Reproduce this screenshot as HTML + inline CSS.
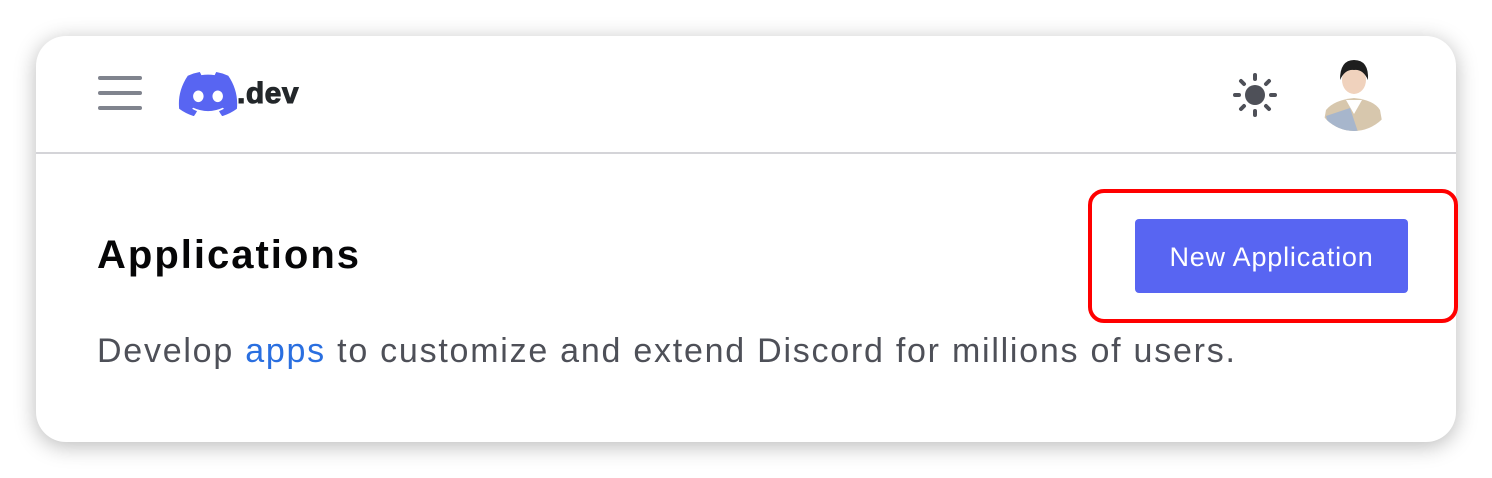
<!DOCTYPE html>
<html><head><style>
body{margin:0;width:1492px;height:478px;background:#fff;font-family:"Liberation Sans",sans-serif;position:relative;overflow:hidden}
.card{position:absolute;left:36px;top:36px;width:1420px;height:406px;background:#fff;border-radius:30px;box-shadow:0 4px 22px rgba(0,0,0,.28);overflow:hidden}
.hdr{position:absolute;left:0;top:0;width:100%;height:116px;border-bottom:2px solid #d4d4d8}
.ham{position:absolute;left:62px;top:40px;width:44px}
.ham div{height:4px;background:#80848e;border-radius:2px;margin-bottom:11px}
h1{position:absolute;left:61px;top:197px;margin:0;font-size:40px;font-weight:bold;color:#060607;letter-spacing:2px}
p{position:absolute;left:61px;top:296px;margin:0;font-size:34px;color:#4e5058;letter-spacing:1.75px}
p span{color:#2a6fe0}
.btn{position:absolute;left:1099px;top:183px;width:273px;height:74px;background:#5865f2;border-radius:4px;color:#fff;font-size:27px;text-align:center;line-height:76px;letter-spacing:0.8px}
.red{position:absolute;left:1088px;top:189px;width:362px;height:126px;border:4px solid #f00;border-radius:16px}
</style></head><body>
<div class="card">
<div class="hdr">
<div class="ham"><div></div><div></div><div></div></div>
<svg style="position:absolute;left:142px;top:36px" width="60" height="44" viewBox="0 0 127 96"><path fill="#5865f2" d="M107.7 8.07A105.15 105.15 0 0 0 81.47 0a72 72 0 0 0-3.360 6.83 97.68 97.68 0 0 0-29.11 0A72.370 72.370 0 0 0 45.640 0a105.890 105.890 0 0 0-26.250 8.090C2.790 32.650-1.710 56.600.540 80.210a105.730 105.730 0 0 0 32.170 16.150 77.700 77.700 0 0 0 6.890-11.110 68.420 68.420 0 0 1-10.850-5.180c.910-.660 1.800-1.340 2.660-2a75.570 75.570 0 0 0 64.320 0c.870.710 1.760 1.390 2.660 2a68.680 68.680 0 0 1-10.870 5.190 77 77 0 0 0 6.890 11.100 105.250 105.250 0 0 0 32.190-16.140c2.640-27.380-4.510-51.110-18.900-72.150ZM42.450 65.690C36.180 65.690 31 60 31 53s5-12.740 11.430-12.740S54 46 53.890 53s-5.050 12.690-11.440 12.690Zm42.240 0C78.410 65.690 73.250 60 73.250 53s5-12.740 11.440-12.740S96.230 46 96.120 53s-5.040 12.690-11.430 12.690Z"/></svg>
<div style="position:absolute;left:201px;top:41px;font-size:30px;font-weight:900;color:#23272a;letter-spacing:0.5px;-webkit-text-stroke:1px #23272a">.dev</div>
<svg style="position:absolute;left:1196px;top:36px" width="46" height="46" viewBox="0 0 46 46"><circle cx="23" cy="23" r="10" fill="#4e5058"/><g stroke="#4e5058" stroke-width="4" stroke-linecap="round"><path d="M23 3v4M23 39v4M3 23h4M39 23h4M9 9l3 3M34 34l3 3M37 9l-3 3M12 34l-3 3"/></g></svg>
<svg style="position:absolute;left:1278px;top:16px" width="80" height="80" viewBox="0 0 80 80"><defs><clipPath id="c"><circle cx="40" cy="40" r="39"/></clipPath></defs><g clip-path="url(#c)"><rect width="80" height="80" fill="#fff"/><path d="M8 80 L12 58 Q20 48 40 46 Q60 48 66 58 L70 80Z" fill="#d7c7ad"/><path d="M32 48 L40 62 L48 48Z" fill="#fff"/><ellipse cx="40" cy="28" rx="12" ry="14" fill="#f0d2bd"/><path d="M26 28 Q26 8 40 8 Q55 8 54 28 Q49 17 40 18 Q31 17 26 28Z" fill="#1e1e1e"/><path d="M12 64 L36 56 L44 80 L16 80Z" fill="#a7b6cc"/></g></svg>
</div>
<h1>Applications</h1>
<p>Develop <span>apps</span> to customize and extend Discord for millions of users.</p>
<div class="btn">New Application</div>
</div>
<div class="red"></div>
</body></html>
